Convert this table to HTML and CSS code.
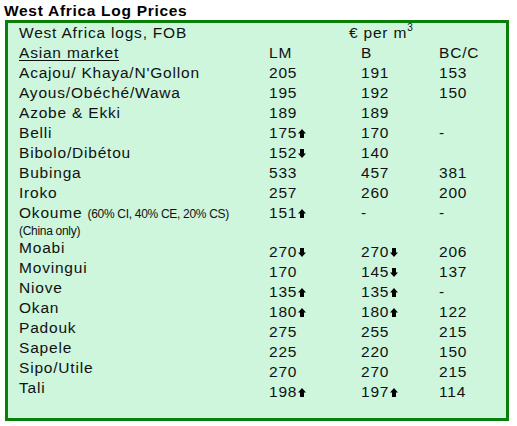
FILE: index.html
```html
<!DOCTYPE html>
<html>
<head>
<meta charset="utf-8">
<link rel="stylesheet" href="styles.css">
</head>
<body>
<h1 class="title">West Africa Log Prices</h1>
<div class="box">
  <div class="row"><div class="lab">West Africa logs, FOB</div><div class="unit">€ per m<sup>3</sup></div></div>
  <div class="row"><div class="lab"><span class="u">Asian market</span></div><div class="num">LM</div><div class="num">B</div><div class="num">BC/C</div></div>
  <div class="row"><div class="lab">Acajou/ Khaya/N'Gollon</div><div class="num">205</div><div class="num">191</div><div class="num">153</div></div>
  <div class="row"><div class="lab">Ayous/Obéché/Wawa</div><div class="num">195</div><div class="num">192</div><div class="num">150</div></div>
  <div class="row"><div class="lab">Azobe &amp; Ekki</div><div class="num">189</div><div class="num">189</div><div class="num"></div></div>
  <div class="row"><div class="lab">Belli</div><div class="num">175<svg class="arr" viewBox="0 0 8 9"><polygon points="4,0 8,4.6 6,4.6 6,9 2,9 2,4.6 0,4.6"/></svg></div><div class="num">170</div><div class="num">-</div></div>
  <div class="row"><div class="lab">Bibolo/Dibétou</div><div class="num">152<svg class="arr" viewBox="0 0 8 9"><polygon points="4,9 8,4.4 6,4.4 6,0 2,0 2,4.4 0,4.4"/></svg></div><div class="num">140</div><div class="num"></div></div>
  <div class="row"><div class="lab">Bubinga</div><div class="num">533</div><div class="num">457</div><div class="num">381</div></div>
  <div class="row"><div class="lab">Iroko</div><div class="num">257</div><div class="num">260</div><div class="num">200</div></div>
  <div class="row tall"><div class="lab">Okoume <span class="small">(60% CI, 40% CE, 20% CS)</span><div class="small note">(China only)</div></div><div class="num">151<svg class="arr" viewBox="0 0 8 9"><polygon points="4,0 8,4.6 6,4.6 6,9 2,9 2,4.6 0,4.6"/></svg></div><div class="num">-</div><div class="num">-</div></div>
  <div class="row late"><div class="lab">Moabi</div><div class="num">270<svg class="arr" viewBox="0 0 8 9"><polygon points="4,9 8,4.4 6,4.4 6,0 2,0 2,4.4 0,4.4"/></svg></div><div class="num">270<svg class="arr" viewBox="0 0 8 9"><polygon points="4,9 8,4.4 6,4.4 6,0 2,0 2,4.4 0,4.4"/></svg></div><div class="num">206</div></div>
  <div class="row late"><div class="lab">Movingui</div><div class="num">170</div><div class="num">145<svg class="arr" viewBox="0 0 8 9"><polygon points="4,9 8,4.4 6,4.4 6,0 2,0 2,4.4 0,4.4"/></svg></div><div class="num">137</div></div>
  <div class="row late"><div class="lab">Niove</div><div class="num">135<svg class="arr" viewBox="0 0 8 9"><polygon points="4,0 8,4.6 6,4.6 6,9 2,9 2,4.6 0,4.6"/></svg></div><div class="num">135<svg class="arr" viewBox="0 0 8 9"><polygon points="4,0 8,4.6 6,4.6 6,9 2,9 2,4.6 0,4.6"/></svg></div><div class="num">-</div></div>
  <div class="row late"><div class="lab">Okan</div><div class="num">180<svg class="arr" viewBox="0 0 8 9"><polygon points="4,0 8,4.6 6,4.6 6,9 2,9 2,4.6 0,4.6"/></svg></div><div class="num">180<svg class="arr" viewBox="0 0 8 9"><polygon points="4,0 8,4.6 6,4.6 6,9 2,9 2,4.6 0,4.6"/></svg></div><div class="num">122</div></div>
  <div class="row late"><div class="lab">Padouk</div><div class="num">275</div><div class="num">255</div><div class="num">215</div></div>
  <div class="row late"><div class="lab">Sapele</div><div class="num">225</div><div class="num">220</div><div class="num">150</div></div>
  <div class="row late"><div class="lab">Sipo/Utile</div><div class="num">270</div><div class="num">270</div><div class="num">215</div></div>
  <div class="row late"><div class="lab">Tali</div><div class="num">198<svg class="arr" viewBox="0 0 8 9"><polygon points="4,0 8,4.6 6,4.6 6,9 2,9 2,4.6 0,4.6"/></svg></div><div class="num">197<svg class="arr" viewBox="0 0 8 9"><polygon points="4,0 8,4.6 6,4.6 6,9 2,9 2,4.6 0,4.6"/></svg></div><div class="num">114</div></div>
</div>
</body>
</html>
```

FILE: styles.css
```css
html, body {
  margin: 0;
  padding: 0;
  background: #ffffff;
}
body {
  font-family: "Liberation Sans", Arial, sans-serif;
  color: #111111;
}
.title {
  margin: 0 0 0 4px;
  padding-top: 2px;
  height: 18px;
  font-size: 15.5px;
  line-height: 18px;
  font-weight: bold;
  letter-spacing: 0.7px;
  color: #000000;
}
.box {
  margin-left: 5px;
  width: 504px;
  box-sizing: border-box;
  border: 3px solid #0a800a;
  background: #cdf6dd;
  padding: 0 0 20px 11px;
  font-size: 15.5px;
  line-height: 20px;
  letter-spacing: 0.8px;
}
.row {
  display: grid;
  grid-template-columns: 250px 92px 78px 1fr;
  height: 20px;
  white-space: nowrap;
}
.row.tall {
  height: 35px;
}
.row.late .num {
  padding-top: 4px;
}
.unit {
  grid-column: 2 / 5;
  padding-left: 80px;
}
.unit sup {
  font-size: 10px;
  line-height: 0;
  vertical-align: 7px;
  letter-spacing: 0;
}
.u {
  text-decoration: underline;
  text-underline-offset: 2px;
}
.small {
  font-size: 12px;
  letter-spacing: -0.3px;
}
.note {
  line-height: 12px;
  margin-top: 1px;
}
.arr {
  width: 8px;
  height: 9px;
  margin-left: 1px;
  vertical-align: 0;
  fill: #000000;
}
```
